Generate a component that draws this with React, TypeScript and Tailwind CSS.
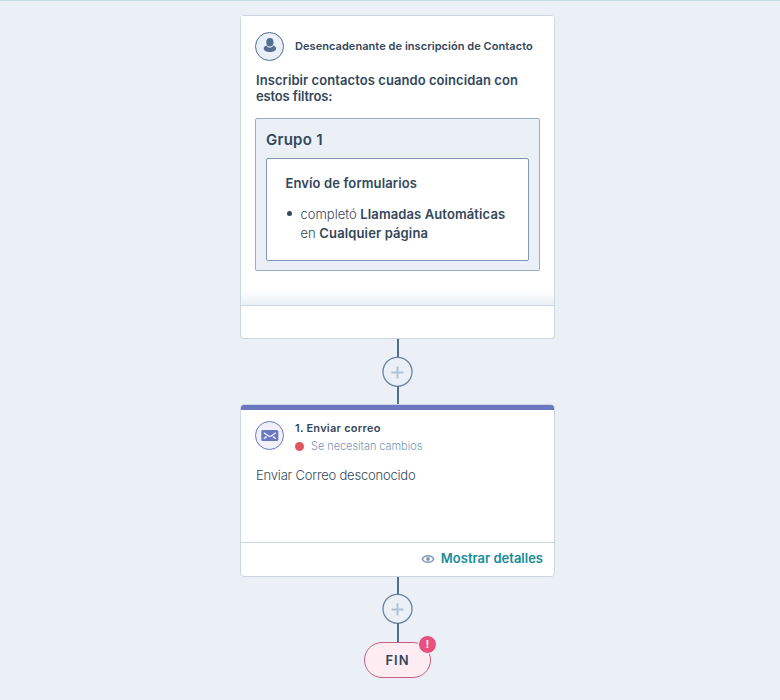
function PersonIcon() {
  return (
    <svg width="29" height="29" viewBox="0 0 29 29" className="block shrink-0">
      <circle cx="14.5" cy="14.5" r="14" fill="#eaf0f6" stroke="#516f90" strokeWidth="1" />
      <ellipse cx="14.9" cy="10.3" rx="3.6" ry="4.3" fill="#516f90" />
      <path d="M11.6 13.6C9.7 14.2 8.7 15.3 8.7 16.6c0 2.1 2.7 3.5 6.2 3.5s6.2-1.4 6.2-3.5c0-1.3-1-2.4-2.9-3-.5 1.3-1.7 2.1-3.3 2.1s-2.8-.8-3.3-2.1Z" fill="#516f90" />
    </svg>
  );
}

function MailIcon() {
  return (
    <svg width="29" height="29" viewBox="0 0 29 29" className="block shrink-0">
      <circle cx="14.5" cy="14.5" r="14" fill="#f0f1fa" stroke="#6a78c1" strokeWidth="1" />
      <rect x="6.3" y="9" width="17" height="11" rx="1.5" fill="#6a78c1" />
      <path d="M9.2 12l3.8 2.7q1.8 1.1 3.6 0l3.8-2.7M9.2 17.4l2.1-1.5M20.4 17.4l-2.1-1.5" fill="none" stroke="#f0f1fa" strokeWidth="1.3" strokeLinecap="round" />
    </svg>
  );
}

function EyeIcon() {
  return (
    <svg width="14" height="10" viewBox="0 0 14 10" className="block">
      <path d="M1.3 5C2.3 2.8 4.3 1.7 7 1.7S11.7 2.8 12.7 5C11.7 7.2 9.7 8.3 7 8.3S2.3 7.2 1.3 5Z" fill="none" stroke="#7c98b6" strokeWidth="1.5" />
      <circle cx="7" cy="5" r="1.9" fill="#7c98b6" />
    </svg>
  );
}

function Connector({ lines }: { lines: [string, string] }) {
  return (
    <div className="flex shrink-0 flex-col items-center">
      <div className={`ml-px w-[2px] bg-[#516f90] ${lines[0]}`} />
      <svg width="31" height="31" viewBox="0 0 31 31" className="-my-px block">
        <circle cx="15.5" cy="15.8" r="14.5" fill="#eaf0f6" stroke="#6a84a2" strokeWidth="1.3" />
        <path d="M15.5 10.5v12M9.5 16.5h12" stroke="#b0c1d4" strokeWidth="2" />
      </svg>
      <div className={`ml-px w-[2px] bg-[#516f90] ${lines[1]}`} />
    </div>
  );
}

export default function App() {
  return (
    <main className="flex h-[700px] w-[780px] flex-col items-center overflow-hidden border-t border-[#c2dfe5] bg-[#eaf0f6] pl-[15px] pt-[14px] font-['Inter','Noto_Sans',sans-serif] text-[#33475b]">
      <section className="h-[324px] w-[315px] shrink-0 rounded-[4px] border border-[#cbd6e2] bg-white">
        <div className="flex h-[290px] flex-col border-b border-[#cbd6e2] bg-[linear-gradient(to_top,#eaf0f6,#ffffff_15px)] px-[14px] pt-4">
          <header className="flex items-center gap-[11px]">
            <PersonIcon />
            <h2 className="whitespace-nowrap text-[11px] font-semibold tracking-[0.055px]">Desencadenante de inscripción de Contacto</h2>
          </header>
          <p className="mt-[11px] whitespace-nowrap pl-px text-[13px] font-semibold leading-4 tracking-[0.07px]">
            Inscribir contactos cuando coincidan con
            <br />
            <span className="tracking-[-0.15px]">estos filtros:</span>
          </p>
          <div className="mt-[14px] h-[153px] rounded-[2px] border border-[#99acc2] bg-[#eaf0f6] px-[10px] pt-[11px]">
            <h3 className="text-[15px] font-semibold leading-5 tracking-[0.25px]">Grupo 1</h3>
            <div className="mt-2 h-[103px] rounded-[2px] border border-[#7c98b6] bg-white pl-[18.5px] pt-[14px] text-[13px]">
              <h4 className="font-semibold leading-5 tracking-[0.12px]">Envío de formularios</h4>
              <div className="mt-3 flex gap-[9px] whitespace-nowrap leading-[19px]">
                <span className="ml-px mt-[6px] h-[5px] w-[5px] rounded-full bg-[#33475b]" />
                <p>
                  <span className="font-light">completó </span>
                  <b className="font-semibold tracking-[0.11px]">Llamadas Automáticas</b>
                  <br />
                  <span className="font-light">en </span>
                  <b className="font-semibold tracking-[0.13px]">Cualquier página</b>
                </p>
              </div>
            </div>
          </div>
        </div>
      </section>

      <Connector lines={["h-[18px]", "h-[18px]"]} />

      <section className="h-[173px] w-[315px] shrink-0 overflow-hidden rounded-[4px] border border-[#cbd6e2] bg-white">
        <div className="h-[5px] bg-[#6a78c1]" />
        <div className="h-[133px] border-b border-[#cbd6e2] px-[14px] pt-[11px]">
          <header className="flex h-9 gap-[11px]">
            <MailIcon />
            <div>
              <h2 className="text-[11px] font-semibold leading-[15px] tracking-[0.25px]">1. Enviar correo</h2>
              <p className="mt-[3px] flex items-center gap-[7px] whitespace-nowrap text-[11px] font-light leading-[15px] tracking-[-0.05px] text-[#7c98b6]">
                <span className="h-[9px] w-[9px] rounded-full bg-[#e0565f]" />
                Se necesitan cambios
              </p>
            </div>
          </header>
          <p className="mt-2 pl-px text-[13px] font-light leading-5 tracking-[-0.2px]">Enviar Correo desconocido</p>
        </div>
        <footer className="flex h-8 items-center justify-end gap-[6px] pr-[11px] text-[13px] font-semibold text-[#158d98]">
          <EyeIcon />
          <span>Mostrar detalles</span>
        </footer>
      </section>

      <Connector lines={["h-[17px]", "h-[19px]"]} />

      <div className="relative flex h-9 w-[67px] shrink-0 items-center justify-center rounded-full border border-[#c75c82] bg-[#fdedf2] pt-px text-[13px] font-semibold">
        <span className="tracking-[1px]">FIN</span>
        <span className="absolute -right-[7px] -top-[8px] flex h-[19px] w-[19px] items-center justify-center rounded-full border border-[#eaf0f6] bg-[#e8517f] text-[10px] font-bold text-white">!</span>
      </div>
    </main>
  );
}
